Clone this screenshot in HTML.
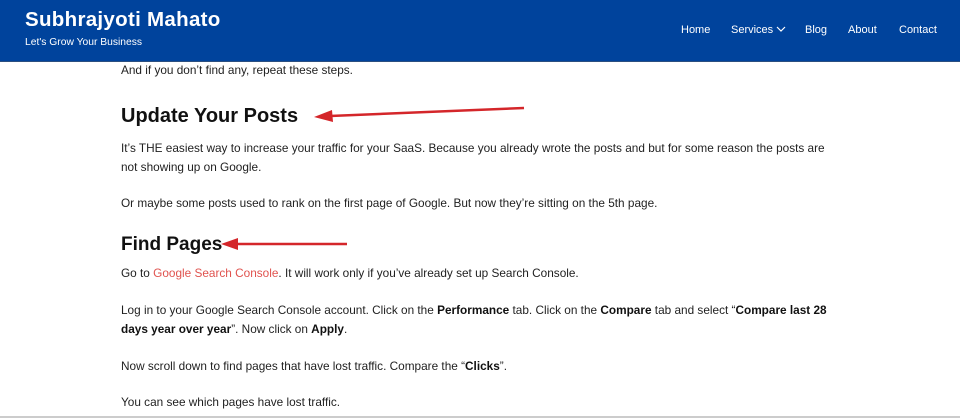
<!DOCTYPE html>
<html><head><meta charset="utf-8"><style>
body{margin:0;width:960px;height:418px;overflow:hidden;background:#fff;font-family:"Liberation Sans",sans-serif;color:#222;position:relative}
.hdr{position:absolute;left:0;top:0;width:960px;height:61px;background:#00439c;border-bottom:1px solid #2b4f80}
.t{position:absolute;white-space:nowrap}
.p{font-size:11.8px;left:121px;color:#1f1f1f}
h2{margin:0;position:absolute;left:121px;font-size:20px;font-weight:bold;color:#111;white-space:nowrap}
.nav{color:#fff;font-size:11px;top:24px}
b{color:#111}
</style></head><body>
<div class="hdr"></div>
<div class="t" style="left:25px;top:8px;color:#fff;font-size:20.5px;font-weight:bold;letter-spacing:0.3px">Subhrajyoti Mahato</div>
<div class="t" style="left:25px;top:37px;color:#fff;font-size:10.3px">Let's Grow Your Business</div>
<div class="t nav" style="left:681px">Home</div>
<div class="t nav" style="left:731px">Services <svg width="10" height="7" viewBox="0 0 10 7"><path d="M1 1l4 4 4-4" stroke="#fff" fill="none" stroke-width="1.2"/></svg></div>
<div class="t nav" style="left:805px">Blog</div>
<div class="t nav" style="left:848px">About</div>
<div class="t nav" style="left:899px">Contact</div>

<div class="t p" style="top:63px">And if you don’t find any, repeat these steps.</div>
<h2 style="top:105px">Update Your Posts</h2>
<div class="t p" style="top:141px">It’s THE easiest way to increase your traffic for your SaaS. Because you already wrote the posts and but for some reason the posts are</div>
<div class="t p" style="top:160px">not showing up on Google.</div>
<div class="t p" style="top:196px">Or maybe some posts used to rank on the first page of Google. But now they’re sitting on the 5th page.</div>
<h2 style="top:234px;font-size:19px">Find Pages</h2>
<div class="t p" style="top:266px">Go to <span style="color:#e0534f">Google Search Console</span>. It will work only if you’ve already set up Search Console.</div>
<div class="t p" style="top:303px">Log in to your Google Search Console account. Click on the <b>Performance</b> tab. Click on the <b>Compare</b> tab and select “<b>Compare last 28</b></div>
<div class="t p" style="top:322px"><b>days year over year</b>”. Now click on <b>Apply</b>.</div>
<div class="t p" style="top:359px">Now scroll down to find pages that have lost traffic. Compare the “<b>Clicks</b>”.</div>
<div class="t p" style="top:395px">You can see which pages have lost traffic.</div>
<div style="position:absolute;left:0;top:416px;width:960px;height:2px;background:#ccc"></div>
<svg style="position:absolute;left:0;top:0" width="960" height="418">
<path d="M330 116 L524 108" stroke="#d4262a" stroke-width="2.5"/><path d="M314 117 L332 110 L333 122 Z" fill="#d4262a"/>
<path d="M236 244 L347 244" stroke="#d4262a" stroke-width="2.5"/><path d="M221 244 L238 238 L238 250 Z" fill="#d4262a"/>
</svg>
</body></html>
